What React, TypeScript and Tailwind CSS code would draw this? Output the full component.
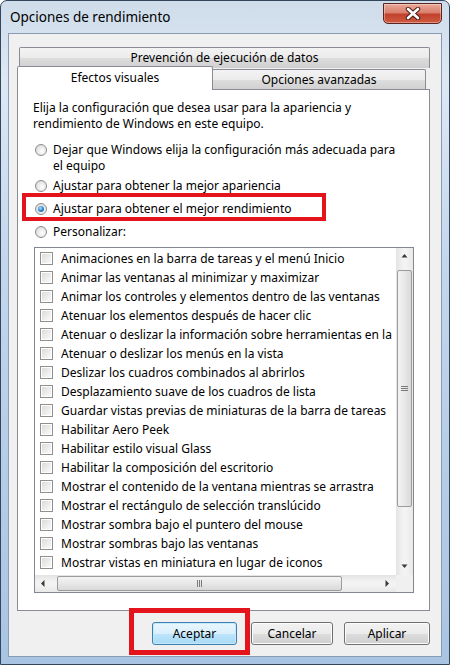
import React from "react";

const items = [
  "Animaciones en la barra de tareas y el menú Inicio",
  "Animar las ventanas al minimizar y maximizar",
  "Animar los controles y elementos dentro de las ventanas",
  "Atenuar los elementos después de hacer clic",
  "Atenuar o deslizar la información sobre herramientas en la",
  "Atenuar o deslizar los menús en la vista",
  "Deslizar los cuadros combinados al abrirlos",
  "Desplazamiento suave de los cuadros de lista",
  "Guardar vistas previas de miniaturas de la barra de tareas",
  "Habilitar Aero Peek",
  "Habilitar estilo visual Glass",
  "Habilitar la composición del escritorio",
  "Mostrar el contenido de la ventana mientras se arrastra",
  "Mostrar el rectángulo de selección translúcido",
  "Mostrar sombra bajo el puntero del mouse",
  "Mostrar sombras bajo las ventanas",
  "Mostrar vistas en miniatura en lugar de iconos",
];

function Radio({ checked }: { checked?: boolean }) {
  return (
    <span className="w-[12px] h-[12px] rounded-full border border-[#8c8c8c] bg-[radial-gradient(circle_at_60%_60%,#ffffff_0%,#e4e4e4_60%,#cfcfcf_100%)] flex items-center justify-center shrink-0">
      {checked && (
        <span className="w-[6px] h-[6px] rounded-full bg-[radial-gradient(circle_at_40%_35%,#a8e0ff_0%,#2a7fc9_55%,#10407a_100%)]" />
      )}
    </span>
  );
}

function Check() {
  return (
    <span className="w-[13px] h-[13px] border border-[#8f8f8f] bg-white p-[1px] shrink-0 flex">
      <span className="flex-1 bg-[linear-gradient(135deg,#dcdcdc_0%,#eeeeee_60%,#f9f9f9_100%)]" />
    </span>
  );
}

function Arrow({ dir }: { dir: "up" | "down" | "left" | "right" }) {
  const pts: Record<string, string> = {
    up: "0.5,4.5 3.5,1 6.5,4.5",
    down: "0.5,1.5 3.5,5 6.5,1.5",
    left: "4.5,0 1,3.5 4.5,7",
    right: "1.5,0 5,3.5 1.5,7",
  };
  return (
    <svg width="7" height="7" viewBox="0 0 7 7">
      <polygon points={pts[dir]} fill="#3a3a3a" />
    </svg>
  );
}

export default function App() {
  const font = { fontFamily: '"Noto Sans", "Open Sans", Arial, sans-serif' };
  return (
    <div
      className="relative w-[450px] h-[665px] overflow-hidden bg-white"
      style={font}
    >
      <div className="w-[450px] h-[665px] flex flex-col rounded-t-[7px] border border-[#34465e] bg-[linear-gradient(180deg,#cfdcea_0%,#dde8f4_12%,#c3d6ec_40%,#a9c4e3_100%)]">
        {/* Title bar */}
        <div className="h-[32px] flex justify-between items-start shrink-0">
          <div className="pl-[9px] pt-[6px] text-[13.5px] leading-[20px] text-black">
            Opciones de rendimiento
          </div>
          <div className="mt-[2px] mr-[7px] w-[59px] h-[21px] rounded-b-[5px] border border-[#5b2421] bg-[linear-gradient(180deg,#eaa898_0%,#d9806d_45%,#c2412d_55%,#cf5b40_100%)] flex items-center justify-center shadow-[inset_0_0_0_1px_rgba(255,255,255,0.35)]">
            <svg width="16" height="13" viewBox="0 0 16 13">
              <path d="M3 2 L13 11 M13 2 L3 11" stroke="#4a1c18" strokeWidth="4.5" strokeLinecap="round" />
              <path d="M3 2 L13 11 M13 2 L3 11" stroke="#ffffff" strokeWidth="2.6" strokeLinecap="round" />
            </svg>
          </div>
        </div>

        {/* Client area */}
        <div className="ml-[7px] mr-[7px] h-[624px] border border-[#8a9cb3] bg-[#f0f0f0] flex flex-col pl-[8px] pt-[13px]">
          {/* Tabs */}
          <div className="ml-[2px] w-[411px] h-[21px] border border-[#898c95] border-b-0 rounded-t-[2px] bg-[linear-gradient(180deg,#f3f3f3_0%,#ebebeb_50%,#dddddd_51%,#cfcfcf_100%)] flex items-center justify-center text-[12px] text-black">
            Prevención de ejecución de datos
          </div>
          <div className="flex items-end -mt-[2px] h-[24px]">
            <div className="relative z-10 w-[196px] h-[24px] border border-[#898c95] border-b-0 rounded-t-[2px] bg-white flex items-center justify-center text-[12px] text-black pb-[2px]">
              Efectos visuales
            </div>
            <div className="w-[214px] h-[21px] -ml-px border border-[#898c95] border-b-0 rounded-t-[2px] bg-[linear-gradient(180deg,#f3f3f3_0%,#ebebeb_50%,#dddddd_51%,#cfcfcf_100%)] flex items-center justify-center text-[12px] text-black">
              Opciones avanzadas
            </div>
          </div>

          {/* Panel */}
          <div className="-mt-px w-[413px] h-[522px] border border-[#898c95] bg-white flex flex-col text-[12px] text-black">
            <div className="pl-[15px] pt-[10px] leading-[16px]">
              Elija la configuración que desea usar para la apariencia y
              <br />
              rendimiento de Windows en este equipo.
            </div>
            <div className="mt-[10px] pl-[17px] flex items-start leading-[16px]">
              <span className="mt-[2px]">
                <Radio />
              </span>
              <span className="ml-[6px]">
                Dejar que Windows elija la configuración más adecuada para
                <br />
                el equipo
              </span>
            </div>
            <div className="mt-[1px] pl-[17px] h-[22px] flex items-center">
              <Radio />
              <span className="ml-[6px]">Ajustar para obtener la mejor apariencia</span>
            </div>
            <div className="pl-[17px] h-[23px] flex items-center">
              <Radio checked />
              <span className="ml-[6px]">Ajustar para obtener el mejor rendimiento</span>
            </div>
            <div className="pl-[17px] h-[23px] flex items-center">
              <Radio />
              <span className="ml-[6px]">Personalizar:</span>
            </div>

            {/* Listbox */}
            <div className="mt-[4px] ml-[16px] w-[380px] h-[346px] border border-[#828790] grid grid-cols-[1fr_17px] grid-rows-[1fr_17px]">
              <div className="overflow-hidden pt-[1px]">
                {items.map((t) => (
                  <div key={t} className="h-[19px] flex items-center pl-[5px] whitespace-nowrap">
                    <Check />
                    <span className="ml-[8px]">{t}</span>
                  </div>
                ))}
              </div>
              {/* vertical scrollbar */}
              <div className="flex flex-col bg-[linear-gradient(90deg,#e3e3e3_0%,#f3f3f3_40%,#f3f3f3_60%,#e8e8e8_100%)]">
                <div className="h-[17px] flex items-center justify-center">
                  <Arrow dir="up" />
                </div>
                <div className="flex-1 pt-[5px]">
                  <div className="mx-[1px] h-[237px] rounded-[2px] border border-[#9b9b9b] bg-[linear-gradient(90deg,#f3f3f3_0%,#e8e8e8_50%,#d9d9d9_100%)] flex items-center justify-center">
                    <svg width="7" height="7" viewBox="0 0 7 7">
                      <path d="M0 1.5 H7 M0 3.5 H7 M0 5.5 H7" stroke="#7a7a7a" strokeWidth="1" />
                    </svg>
                  </div>
                </div>
                <div className="h-[17px] flex items-center justify-center">
                  <Arrow dir="down" />
                </div>
              </div>
              {/* horizontal scrollbar */}
              <div className="flex items-center bg-[linear-gradient(180deg,#e3e3e3_0%,#f3f3f3_40%,#f3f3f3_60%,#e8e8e8_100%)]">
                <div className="w-[17px] h-[17px] flex items-center justify-center">
                  <Arrow dir="left" />
                </div>
                <div className="flex-1 h-[17px] flex items-center pl-[5px]">
                  <div className="w-[285px] h-[15px] rounded-[2px] border border-[#9b9b9b] bg-[linear-gradient(180deg,#f3f3f3_0%,#e8e8e8_50%,#d9d9d9_100%)] flex items-center justify-center">
                    <svg width="7" height="7" viewBox="0 0 7 7">
                      <path d="M1.5 0 V7 M3.5 0 V7 M5.5 0 V7" stroke="#7a7a7a" strokeWidth="1" />
                    </svg>
                  </div>
                </div>
                <div className="w-[17px] h-[17px] flex items-center justify-center">
                  <Arrow dir="right" />
                </div>
              </div>
              <div className="bg-[#f0f0f0]" />
            </div>
          </div>

          {/* Buttons */}
          <div className="mt-[11px] w-[413px] flex justify-end text-[12px] text-black">
            <div className="w-[85px] h-[23px] rounded-[3px] border border-[#3c7fb1] bg-[linear-gradient(180deg,#eaf6fd_0%,#d9f0fc_50%,#bee6fd_51%,#a7d9f5_100%)] shadow-[inset_0_0_0_1px_#c6e8fb] flex items-center justify-center">
              Aceptar
            </div>
            <div className="ml-[14px] w-[82px] h-[23px] rounded-[3px] border border-[#707070] bg-[linear-gradient(180deg,#f2f2f2_0%,#ebebeb_50%,#dddddd_51%,#cfcfcf_100%)] shadow-[inset_0_0_0_1px_#fcfcfc] flex items-center justify-center">
              Cancelar
            </div>
            <div className="ml-[11px] w-[86px] h-[23px] rounded-[3px] border border-[#707070] bg-[linear-gradient(180deg,#f2f2f2_0%,#ebebeb_50%,#dddddd_51%,#cfcfcf_100%)] shadow-[inset_0_0_0_1px_#fcfcfc] flex items-center justify-center">
              Aplicar
            </div>
          </div>
        </div>
      </div>

      {/* Red annotation boxes */}
      <div className="absolute left-[22px] top-[193px] w-[304px] h-[28px] border-[4px] border-[#e4141c]" />
      <div className="absolute left-[129px] top-[608px] w-[121px] h-[47px] border-[5px] border-[#e4141c]" />
    </div>
  );
}
